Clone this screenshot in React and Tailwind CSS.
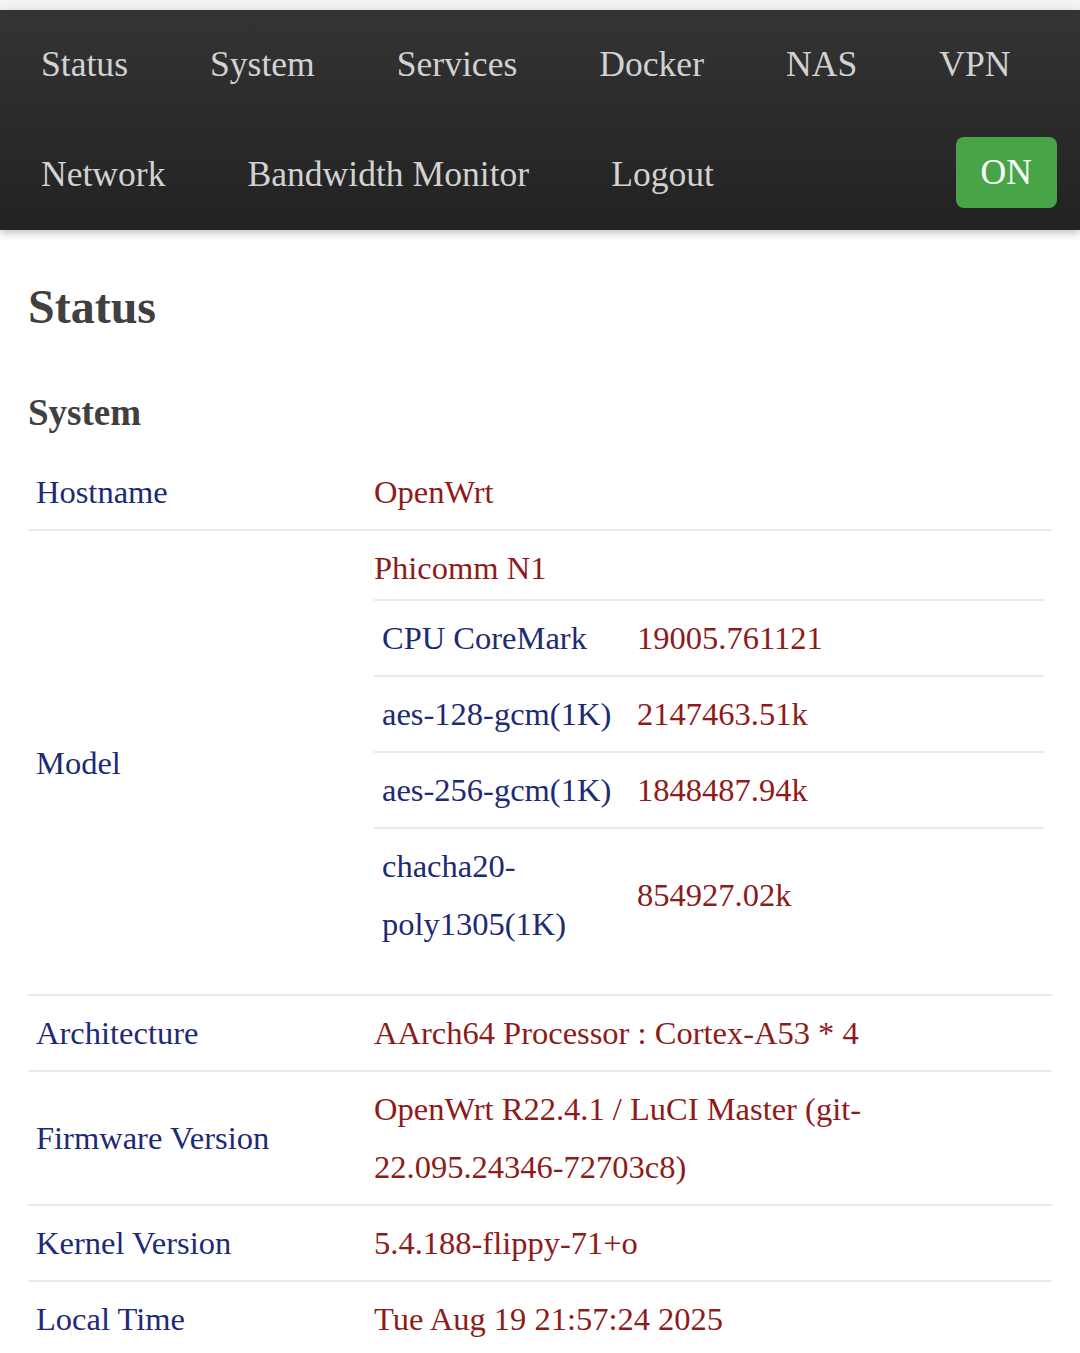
const navItems = [
  "Status",
  "System",
  "Services",
  "Docker",
  "NAS",
  "VPN",
  "Network",
  "Bandwidth Monitor",
  "Logout",
];

const benchmarks = [
  ["CPU CoreMark", "19005.761121"],
  ["aes-128-gcm(1K)", "2147463.51k"],
  ["aes-256-gcm(1K)", "1848487.94k"],
  ["chacha20-poly1305(1K)", "854927.02k"],
];

const Row = ({ label, first, children }) => (
  <div
    className={`flex ${first ? "" : "border-t-2 border-[#e8eaec]"}`}
  >
    <div className="flex w-[338px] shrink-0 items-center px-2 py-2 text-[#1d2a74]">
      {label}
    </div>
    <div className="flex-1 px-2 py-2 text-[#8e1b1b]">{children}</div>
  </div>
);

const App = () => {
  return (
    <div className="min-h-screen bg-white font-['Liberation_Serif',serif] text-[32.5px] leading-[58px]">
      <div className="h-[10px] bg-[#f3f3f3]" />

      {/* Top navigation */}
      <nav className="relative z-10 flex flex-wrap bg-gradient-to-b from-[#343434] to-[#222222] text-[35.6px] leading-none text-[#d2d2d2] shadow-[0_3px_8px_rgba(0,0,0,0.25)]">
        {navItems.map((item) => (
          <a key={item} className="flex h-[110px] items-center px-[41px]">
            {item}
          </a>
        ))}
        <div className="ml-auto mr-[23px] flex h-[110px] items-center pb-[5px]">
          <span className="flex h-[71px] items-center rounded-lg bg-[#47a547] px-[25px] text-white">
            ON
          </span>
        </div>
      </nav>

      <main className="px-[28px]">
        <h2 className="mt-[53px] text-[48px] font-bold leading-none text-[#404040]">
          Status
        </h2>
        <h3 className="mt-[63px] text-[37px] font-bold leading-none text-[#404040]">
          System
        </h3>

        <div className="mt-[24px]">
          <Row label="Hostname" first>
            OpenWrt
          </Row>
          <Row label="Model">
            <div>Phicomm N1</div>
            <div className="mb-[25px] mt-[2px]">
              {benchmarks.map(([name, value]) => (
                <div key={name} className="flex border-t-2 border-[#e8eaec]">
                  <div className="w-[255px] shrink-0 px-2 py-2 text-[#1d2a74]">
                    {name}
                  </div>
                  <div className="flex flex-1 items-center px-2 py-2">
                    {value}
                  </div>
                </div>
              ))}
            </div>
          </Row>
          <Row label="Architecture">AArch64 Processor : Cortex-A53 * 4</Row>
          <Row label="Firmware Version">
            <div className="w-[520px]">
              OpenWrt R22.4.1 / LuCI Master (git-22.095.24346-72703c8)
            </div>
          </Row>
          <Row label="Kernel Version">5.4.188-flippy-71+o</Row>
          <Row label="Local Time">Tue Aug 19 21:57:24 2025</Row>
        </div>
      </main>
    </div>
  );
};

export default App;
